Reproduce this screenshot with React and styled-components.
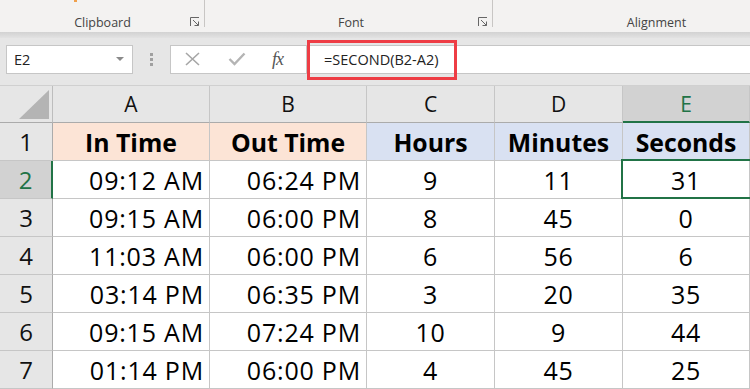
import styled, { createGlobalStyle } from 'styled-components';

const GlobalStyle = createGlobalStyle`
  html, body {
    margin: 0;
    padding: 0;
    background: #ffffff;
    overflow: hidden;
  }
  body {
    font-family: "Open Sans", "Liberation Sans", sans-serif;
  }
`;

const GREEN = '#217346';

const Page = styled.div`
  width: 750px;
  height: 389px;
  display: flex;
  flex-direction: column;
  overflow: hidden;
`;

/* ribbon */

const Ribbon = styled.div`
  height: 32px;
  display: grid;
  grid-template-columns: 205px 288px 1fr;
  background: #f3f2f1;
`;

const RibbonGroup = styled.div`
  position: relative;
  display: flex;
  align-items: flex-end;
  justify-content: center;
  padding-bottom: 1px;
  padding-left: ${p => p.shift || 0}px;
  font-size: 12.5px;
  color: #444444;

  &::after {
    content: '';
    display: ${p => (p.last ? 'none' : 'block')};
    position: absolute;
    right: 0;
    top: 0;
    bottom: 5px;
    width: 1px;
    background: #c8c6c4;
  }
`;

const Launcher = styled.svg`
  position: absolute;
  right: 5px;
  bottom: 5px;
`;

const PasteHint = styled.span`
  position: absolute;
  left: 74px;
  top: 0;
  width: 3px;
  height: 2px;
  background: #f0a04b;
`;

const Shade = styled.div`
  height: 6px;
  background: linear-gradient(#d2d2d2, #e2e2e2);
`;

/* formula bar */

const FormulaBar = styled.div`
  height: 49px;
  display: flex;
  align-items: flex-start;
  padding: 7px 0 0 6px;
  box-sizing: border-box;
  background: #e6e6e6;
  border-bottom: 1px solid #d0d0d0;
`;

const NameBox = styled.div`
  width: 127px;
  height: 29px;
  box-sizing: border-box;
  background: #ffffff;
  border: 1px solid #c6c6c6;
  display: flex;
  align-items: center;
  justify-content: space-between;
  padding: 0 8px 0 7px;
  font-size: 14.5px;
  color: #222222;
`;

const Caret = styled.span`
  width: 0;
  height: 0;
  border-left: 4px solid transparent;
  border-right: 4px solid transparent;
  border-top: 4px solid #8a8a8a;
`;

const Grip = styled.div`
  width: 37px;
  height: 29px;
  display: flex;
  flex-direction: column;
  align-items: center;
  justify-content: center;
  gap: 2px;

  span {
    width: 3px;
    height: 3px;
    background: #a0a0a0;
  }
`;

const ActionBox = styled.div`
  width: 137px;
  height: 29px;
  box-sizing: border-box;
  background: #ffffff;
  border: 1px solid #c6c6c6;
  display: flex;
  align-items: center;
  padding-left: 14px;
  gap: 28px;
`;

const Fx = styled.span`
  font-family: "Liberation Serif", "DejaVu Serif", serif;
  font-style: italic;
  font-size: 18px;
  color: #555555;
  letter-spacing: -1px;
  margin-left: -2px;
`;

const FormulaInput = styled.div`
  position: relative;
  flex: 1;
  height: 29px;
  box-sizing: border-box;
  background: #ffffff;
  border-top: 1px solid #c6c6c6;
  border-bottom: 1px solid #c6c6c6;
  display: flex;
  align-items: center;
  padding-left: 17px;
  font-size: 14.5px;
  color: #222222;
`;

const Highlight = styled.div`
  position: absolute;
  left: 0;
  top: -6px;
  width: 150px;
  height: 40px;
  box-sizing: border-box;
  border: 3px solid #ee3d45;
`;

/* sheet */

const Sheet = styled.div`
  display: grid;
  grid-template-columns: 53px 157px 157px 128px 128px 127px;
  grid-template-rows: 37px;
  grid-auto-rows: 38px;
`;

const Corner = styled.div`
  position: relative;
  background: #e6e6e6;
  border-right: 1px solid #bdbdbd;
  border-bottom: 1px solid #ababab;
  box-sizing: border-box;

  &::after {
    content: '';
    position: absolute;
    right: 3px;
    bottom: 3px;
    width: 0;
    height: 0;
    border-left: 30px solid transparent;
    border-bottom: 29px solid #b4b4b4;
  }
`;

const ColHead = styled.div`
  display: flex;
  align-items: center;
  justify-content: center;
  box-sizing: border-box;
  background: ${p => (p.active ? '#d2d2d2' : '#e6e6e6')};
  color: ${p => (p.active ? GREEN : '#111111')};
  border-right: 1px solid #c6c6c6;
  border-bottom: ${p => (p.active ? `2px solid ${GREEN}` : '1px solid #ababab')};
  font-size: 21px;
  padding-top: ${p => (p.active ? 1 : 0)}px;
`;

const RowHead = styled.div`
  display: flex;
  align-items: center;
  justify-content: center;
  box-sizing: border-box;
  background: ${p => (p.active ? '#d2d2d2' : '#e6e6e6')};
  color: ${p => (p.active ? GREEN : '#111111')};
  border-right: ${p => (p.active ? `2px solid ${GREEN}` : '1px solid #ababab')};
  border-bottom: 1px solid #c6c6c6;
  font-size: 24px;
`;

const Cell = styled.div`
  position: relative;
  display: flex;
  align-items: center;
  justify-content: ${p => (p.align === 'right' ? 'flex-end' : 'center')};
  padding-right: ${p => (p.align === 'right' ? 5 : 0)}px;
  box-sizing: border-box;
  background: ${p => p.fill || '#ffffff'};
  border-right: 1px solid #c6c6c6;
  border-bottom: 1px solid #c6c6c6;
  font-size: ${p => (p.bold ? 24.8 : 25)}px;
  letter-spacing: ${p => (p.bold ? 0 : 0.8)}px;
  font-weight: ${p => (p.bold ? 700 : 400)};
  color: #000000;
  white-space: nowrap;

  ${p => p.selected && `
    &::after {
      content: '';
      position: absolute;
      left: -2px;
      top: -2px;
      right: -4px;
      bottom: -1px;
      border: 2px solid ${GREEN};
    }
  `}
`;

const PEACH = '#fce4d6';
const BLUE = '#d9e1f2';

const columns = ['A', 'B', 'C', 'D', 'E'];
const headers = [
  { text: 'In Time', fill: PEACH },
  { text: 'Out Time', fill: PEACH },
  { text: 'Hours', fill: BLUE },
  { text: 'Minutes', fill: BLUE },
  { text: 'Seconds', fill: BLUE },
];

const rows = [
  ['09:12 AM', '06:24 PM', 9, 11, 31],
  ['09:15 AM', '06:00 PM', 8, 45, 0],
  ['11:03 AM', '06:00 PM', 6, 56, 6],
  ['03:14 PM', '06:35 PM', 3, 20, 35],
  ['09:15 AM', '07:24 PM', 10, 9, 44],
  ['01:14 PM', '06:00 PM', 4, 45, 25],
];

const LauncherIcon = () => (
  <Launcher width="10" height="10" viewBox="0 0 10 10">
    <path d="M0.5 9V0.5H9" fill="none" stroke="#666" strokeWidth="1" />
    <path d="M3 3L8.5 8.5M8.5 4.5V8.5H4.5" fill="none" stroke="#666" strokeWidth="1" />
  </Launcher>
);

export default function App() {
  return (
    <Page>
      <GlobalStyle />
      <Ribbon>
        <RibbonGroup shift={0}>
          <PasteHint />
          Clipboard
          <LauncherIcon />
        </RibbonGroup>
        <RibbonGroup shift={4}>
          Font
          <LauncherIcon />
        </RibbonGroup>
        <RibbonGroup last shift={70}>Alignment</RibbonGroup>
      </Ribbon>
      <Shade />

      <FormulaBar>
        <NameBox>
          E2
          <Caret />
        </NameBox>
        <Grip>
          <span />
          <span />
          <span />
        </Grip>
        <ActionBox>
          <svg width="15" height="14" viewBox="0 0 15 14">
            <path d="M1 1L14 13M14 1L1 13" stroke="#a6a6a6" strokeWidth="1.6" fill="none" />
          </svg>
          <svg width="18" height="14" viewBox="0 0 18 14">
            <path d="M1.5 7L6.5 12L16.5 1.5" stroke="#b4b4b4" strokeWidth="2.4" fill="none" />
          </svg>
          <Fx>fx</Fx>
        </ActionBox>
        <FormulaInput>
          =SECOND(B2-A2)
          <Highlight />
        </FormulaInput>
      </FormulaBar>

      <Sheet>
        <Corner />
        {columns.map(c => (
          <ColHead key={c} active={c === 'E'}>{c}</ColHead>
        ))}

        <RowHead>1</RowHead>
        {headers.map(h => (
          <Cell key={h.text} fill={h.fill} bold>{h.text}</Cell>
        ))}

        {rows.map((r, i) => (
          <Row key={i} n={i + 2} values={r} />
        ))}
      </Sheet>
    </Page>
  );
}

function Row({ n, values }) {
  return (
    <>
      <RowHead active={n === 2}>{n}</RowHead>
      {values.map((v, j) => (
        <Cell
          key={j}
          align={j < 2 ? 'right' : 'center'}
          selected={n === 2 && j === 4}
        >
          {v}
        </Cell>
      ))}
    </>
  );
}
